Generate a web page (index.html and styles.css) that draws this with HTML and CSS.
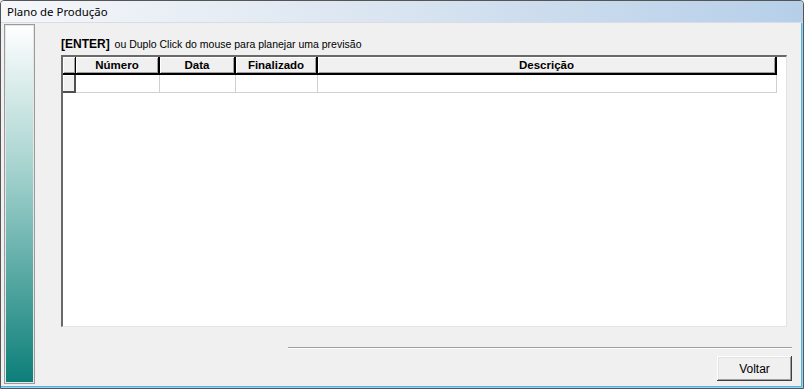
FILE: index.html
```html
<!DOCTYPE html>
<html>
<head>
<meta charset="utf-8">
<link rel="stylesheet" href="styles.css">
</head>
<body>
<div class="window">
  <div class="titlebar">Plano de Produção</div>
  <div class="client">
    <div class="strip"></div>
    <div class="main">
      <div class="hint"><b>[ENTER]</b> ou Duplo Click do mouse para planejar uma previsão</div>
      <div class="grid">
        <div class="row head">
          <div class="cell ind"></div>
          <div class="cell c1">Número</div>
          <div class="cell c2">Data</div>
          <div class="cell c3">Finalizado</div>
          <div class="cell c4">Descrição</div>
        </div>
        <div class="row body">
          <div class="cell ind"></div>
          <div class="cell c1"></div>
          <div class="cell c2"></div>
          <div class="cell c3"></div>
          <div class="cell c4"></div>
        </div>
      </div>
      <div class="footer">
        <div class="sep"></div>
        <div class="btnrow"><button class="btn">Voltar</button></div>
      </div>
    </div>
  </div>
</div>
</body>
</html>
```
FILE: styles.css
```css
html, body { margin: 0; padding: 0; background: #f0f0f0; }
body { width: 804px; height: 389px; overflow: hidden; font-family: "DejaVu Sans", Tahoma, sans-serif; }
.window {
  box-sizing: border-box;
  width: 804px; height: 389px;
  border: 1px solid #555;
  border-radius: 4px 4px 0 0;
  box-shadow: inset -1px -1px 0 #9ad0f0, inset -2px -2px 0 #4fb3e6;
  display: flex; flex-direction: column;
  background: #f0f0f0;
}
.titlebar {
  height: 21px;
  flex: none;
  background: linear-gradient(to right, #f5f7fa 0%, #dfe8f2 40%, #b6cfe9 100%);
  border-bottom: 1px solid #d6dde6;
  font-family: "Noto Sans", "Open Sans", sans-serif;
  font-size: 11.4px;
  line-height: 21px;
  padding-left: 6px;
  color: #000;
  border-radius: 3px 3px 0 0;
}
.client { flex: 1; display: flex; padding: 1px 3px 3px 3px; }
.strip {
  width: 29px;
  margin-bottom: 1px;
  border: 1px solid #9a9a9a;
  box-shadow: inset 0 0 0 1px #e6e6e6;
  background: linear-gradient(to bottom, #ffffff 0%, #a6d3cf 40%, #0b7e78 100%);
  flex: none;
}
.main { flex: 1; display: flex; flex-direction: column; padding: 13px 13px 0 26px; }
.hint {
  font-family: "Liberation Sans", Arial, sans-serif;
  font-size: 10.5px;
  height: 14px;
  line-height: 14px;
  color: #000;
  margin-bottom: 4px;
}
.hint b { font-size: 12px; margin-right: 2px; }
.grid {
  height: 272px;
  background: #fff;
  border-left: 2px solid #696969;
  border-top: 2px solid #696969;
  border-right: 1px solid #e3e3e3;
  border-bottom: 1px solid #e3e3e3;
  box-sizing: border-box;
}
.row { display: flex; height: 18px; }
.cell { box-sizing: border-box; flex: none; }
.c1 { width: 84px; }
.c2 { width: 76px; }
.c3 { width: 82px; }
.c4 { width: 459px; }
.head .cell {
  background: #f0f0f0;
  border-right: 2px solid #000;
  border-bottom: 2px solid #000;
  box-shadow: inset 1px 1px 0 #fff, inset -1px -1px 0 #a0a0a0;
  font-family: "Liberation Sans", Arial, sans-serif;
  font-weight: bold;
  font-size: 11.5px;
  line-height: 16px;
  text-align: center;
}
.head .cell.ind { border-right: 1px solid #000; width: 13px; }
.body .cell {
  border-right: 1px solid #d0d0d0;
  border-bottom: 1px solid #d0d0d0;
}
.body .cell.ind {
  width: 13px;
  background: #f0f0f0;
  border-right: 2px solid #505050;
  border-bottom: 2px solid #505050;
  box-shadow: inset 1px 1px 0 #fff;
}
.footer { flex: 1; display: flex; flex-direction: column; margin-right: -5px; }
.sep {
  margin-top: 20px;
  margin-left: 227px;
  height: 1px;
  background: #a0a0a0;
  border-bottom: 1px solid #fff;
}
.btnrow { display: flex; justify-content: flex-end; margin-top: 7px; }
.btn {
  width: 75px; height: 25px;
  background: #f0f0f0;
  border: none;
  box-shadow: inset -1px -1px 0 #404040, inset 1px 1px 0 #fff, inset -2px -2px 0 #a0a0a0, inset 2px 2px 0 #e3e3e3;
  font-family: "Liberation Sans", Arial, sans-serif;
  font-size: 12px;
  padding: 0;
  color: #000;
}
```
